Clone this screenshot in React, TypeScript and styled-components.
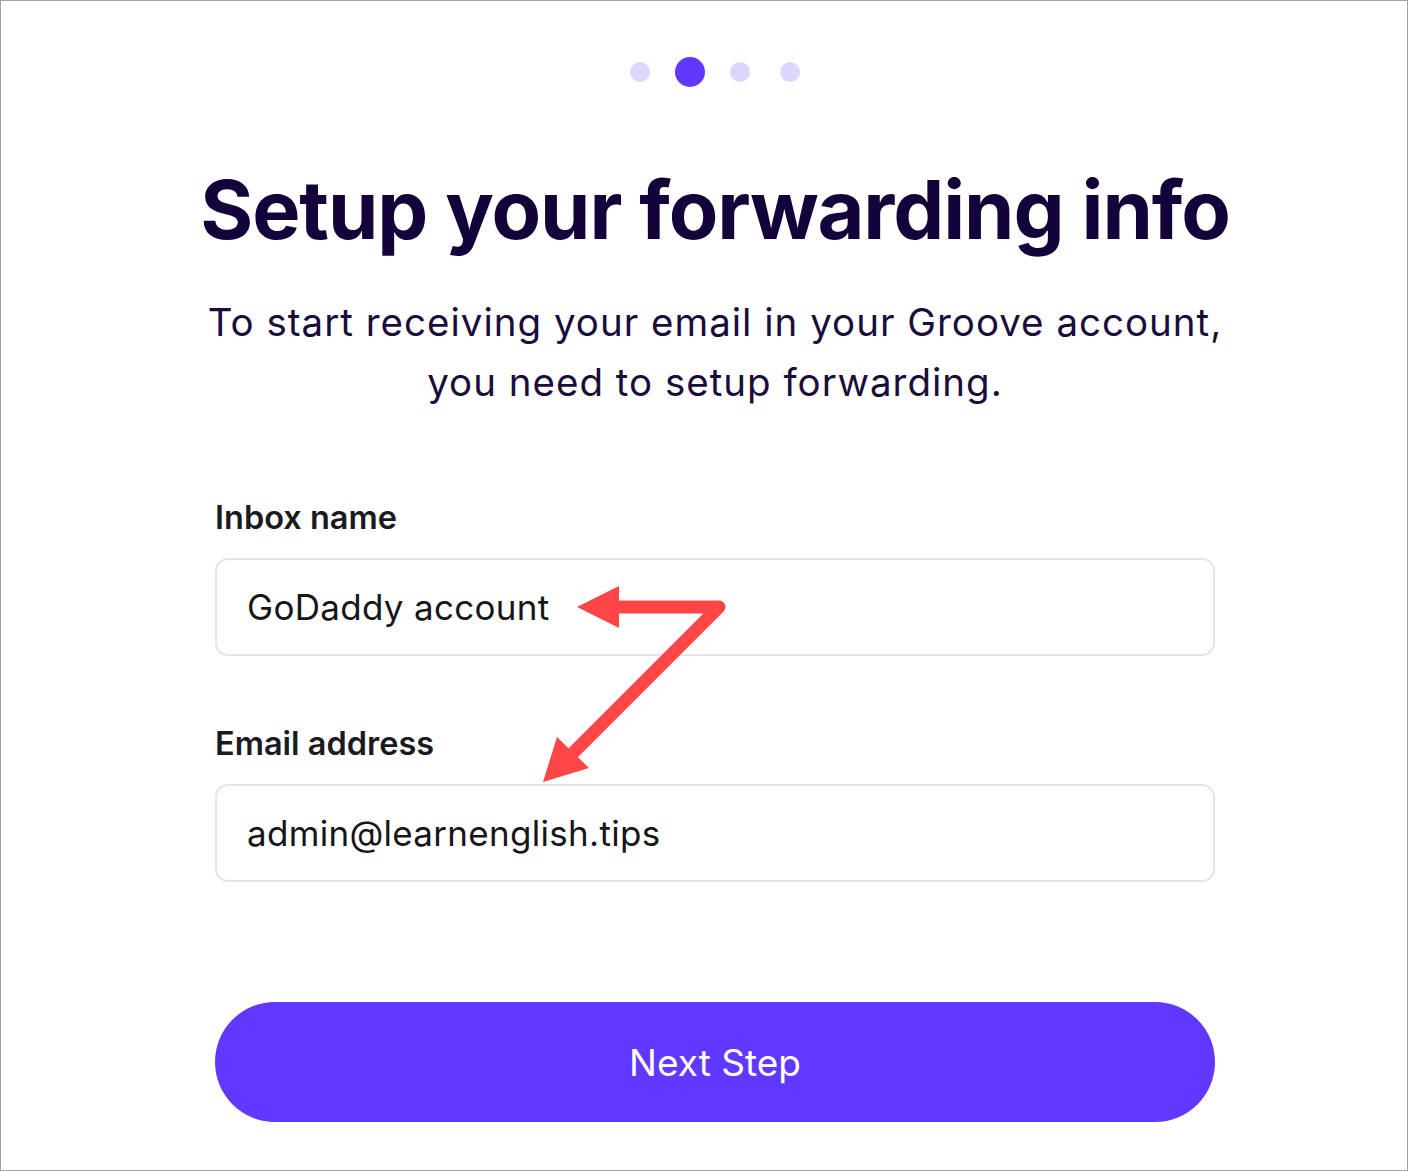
import styled, { createGlobalStyle } from 'styled-components'

const GlobalStyle = createGlobalStyle`
  html, body {
    margin: 0;
    padding: 0;
    background: #ffffff;
  }
  * {
    box-sizing: border-box;
  }
`

const Frame = styled.div`
  position: relative;
  width: 1408px;
  height: 1171px;
  border: 1px solid #a3a3a3;
  padding-left: 22px;
  display: flex;
  justify-content: center;
  font-family: Inter, 'Noto Sans', sans-serif;
  background: #ffffff;
`

const Column = styled.div`
  width: 1000px;
  display: flex;
  flex-direction: column;
  align-items: center;
`

const Steps = styled.div`
  margin-top: 55px;
  height: 32px;
  display: flex;
  align-items: center;
  gap: 30px;
`

const Dot = styled.span<{ $active?: boolean }>`
  width: ${(p) => (p.$active ? '30px' : '20px')};
  height: ${(p) => (p.$active ? '30px' : '20px')};
  margin: ${(p) => (p.$active ? '0 -5px' : '0')};
  border-radius: 50%;
  background: ${(p) => (p.$active ? '#6038ff' : '#ddd6fe')};
`

const Title = styled.h1`
  margin: 72px 0 0;
  font-size: 81px;
  line-height: 100px;
  font-weight: 700;
  letter-spacing: -1.1px;
  color: #14033a;
  white-space: nowrap;
`

const Subtitle = styled.p`
  margin: 32px 0 0;
  font-size: 38.5px;
  line-height: 60px;
  font-weight: 400;
  letter-spacing: 1px;
  color: #1a0d3c;
  text-align: center;
  white-space: nowrap;
`

const Form = styled.div`
  margin-top: 86px;
  width: 1000px;
  display: flex;
  flex-direction: column;
`

const Field = styled.div`
  display: flex;
  flex-direction: column;
  gap: 20px;
  margin-bottom: 68px;
`

const Label = styled.label`
  font-size: 32.5px;
  line-height: 40px;
  font-weight: 600;
  color: #1b1b1f;
`

const Input = styled.div`
  height: 98px;
  border: 2px solid #e4e4ea;
  border-radius: 13px;
  padding: 0 30px;
  display: flex;
  align-items: center;
  font-size: 35px;
  letter-spacing: 0.3px;
  color: #16161a;
`

const Button = styled.button`
  margin-top: 52px;
  width: 1000px;
  height: 120px;
  border: none;
  border-radius: 60px;
  background: #6038ff;
  color: #ffffff;
  font-family: inherit;
  font-size: 37px;
  font-weight: 400;
  cursor: pointer;
`

const Annotation = styled.svg`
  position: absolute;
  left: 0;
  top: 0;
  pointer-events: none;
`

export default function App() {
  return (
    <>
      <GlobalStyle />
      <Frame>
        <Column>
          <Steps>
            <Dot />
            <Dot $active />
            <Dot />
            <Dot />
          </Steps>
          <Title>Setup your forwarding info</Title>
          <Subtitle>
            To start receiving your email in your Groove account,
            <br />
            you need to setup forwarding.
          </Subtitle>
          <Form>
            <Field>
              <Label>Inbox name</Label>
              <Input>GoDaddy account</Input>
            </Field>
            <Field>
              <Label>Email address</Label>
              <Input>admin@learnenglish.tips</Input>
            </Field>
          </Form>
          <Button>Next Step</Button>
        </Column>
        <Annotation width="1408" height="1171" viewBox="0 0 1408 1171">
          <path
            d="M 612 606 L 718 606 L 572 752"
            fill="none"
            stroke="#ff4646"
            strokeWidth="13"
            strokeLinejoin="round"
          />
          <polygon points="576,606 618,585 618,627" fill="#ff4646" />
          <polygon points="542,781 556,736 588,767" fill="#ff4646" />
        </Annotation>
      </Frame>
    </>
  )
}
